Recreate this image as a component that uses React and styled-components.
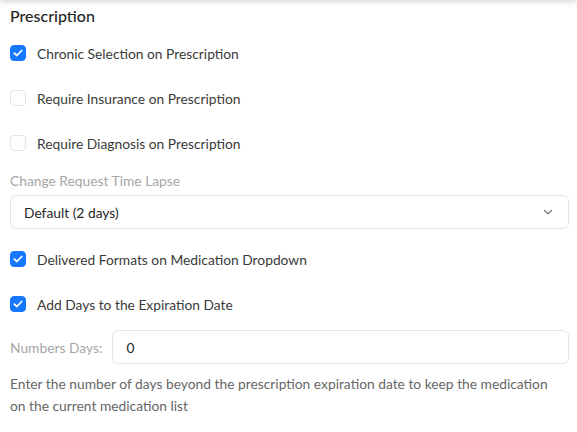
import styled, { createGlobalStyle } from 'styled-components'

const GlobalStyle = createGlobalStyle`
  html, body {
    margin: 0;
    padding: 0;
    background: #fff;
  }
  body {
    font-family: Lato, "Noto Sans", sans-serif;
  }
`

const Panel = styled.div`
  width: 577px;
  height: 432px;
  box-sizing: border-box;
  padding: 0 8px 0 10px;
  position: relative;
  background: #fff;
  overflow: hidden;
  &::before {
    content: '';
    position: absolute;
    left: 0;
    right: 0;
    top: -6px;
    height: 6px;
    box-shadow: 0 1px 6px rgba(120, 100, 110, 0.35);
  }
`

const Title = styled.h2`
  margin: 0;
  padding-top: 6px;
  font-size: 16px;
  font-weight: 500;
  line-height: 20px;
  color: #262626;
`

const CheckRow = styled.label`
  display: flex;
  align-items: center;
  gap: 11px;
  height: 16px;
  margin-top: ${p => p.$gap}px;
  font-size: 13.8px;
  color: #3a3a3a;
`

const Box = styled.span`
  width: 16px;
  height: 16px;
  box-sizing: border-box;
  border-radius: 4px;
  display: flex;
  align-items: center;
  justify-content: center;
  background: ${p => (p.$checked ? '#1677ff' : '#fff')};
  border: 1px solid ${p => (p.$checked ? '#1677ff' : '#e3e3e3')};
`

const FieldLabel = styled.div`
  margin-top: 22px;
  font-size: 13.8px;
  line-height: 16px;
  color: #a6a6a6;
`

const Select = styled.div`
  margin-top: 6px;
  height: 34px;
  box-sizing: border-box;
  border: 1px solid #e6e6e6;
  border-radius: 6px;
  display: flex;
  align-items: center;
  justify-content: space-between;
  padding: 0 14px 0 13px;
  font-size: 13.8px;
  color: #262626;
`

const InputRow = styled.div`
  margin-top: 18px;
  display: flex;
  align-items: center;
  gap: 10px;
`

const InlineLabel = styled.span`
  flex: 0 0 92px;
  white-space: nowrap;
  font-size: 13.8px;
  color: #a6a6a6;
`

const Input = styled.div`
  flex: 1;
  height: 34px;
  box-sizing: border-box;
  border: 1px solid #e6e6e6;
  border-radius: 6px;
  display: flex;
  align-items: center;
  padding: 0 13px;
  font-size: 13.8px;
  color: #262626;
`

const Help = styled.p`
  margin: 9px 0 0;
  max-width: 552px;
  font-size: 13.8px;
  line-height: 22px;
  color: #666;
`

const Check = () => (
  <svg width="10" height="8" viewBox="0 0 10 8" fill="none">
    <path d="M1.3 4.1 L3.9 6.5 L8.7 1.5" stroke="#fff" strokeWidth="1.8" strokeLinecap="round" strokeLinejoin="round" />
  </svg>
)

function CheckItem({ checked, gap, children }) {
  return (
    <CheckRow $gap={gap}>
      <Box $checked={checked}>{checked && <Check />}</Box>
      {children}
    </CheckRow>
  )
}

export default function App() {
  return (
    <>
      <GlobalStyle />
      <Panel>
        <Title>Prescription</Title>
        <CheckItem checked gap={19}>Chronic Selection on Prescription</CheckItem>
        <CheckItem gap={29}>Require Insurance on Prescription</CheckItem>
        <CheckItem gap={29}>Require Diagnosis on Prescription</CheckItem>
        <FieldLabel>Change Request Time Lapse</FieldLabel>
        <Select>
          Default (2 days)
          <svg width="12" height="12" viewBox="0 0 12 12" fill="none">
            <path d="M2.5 4.5 L6 7.8 L9.5 4.5" stroke="#777" strokeWidth="1.3" strokeLinecap="round" strokeLinejoin="round" />
          </svg>
        </Select>
        <CheckItem checked gap={22}>Delivered Formats on Medication Dropdown</CheckItem>
        <CheckItem checked gap={29}>Add Days to the Expiration Date</CheckItem>
        <InputRow>
          <InlineLabel>Numbers Days:</InlineLabel>
          <Input>0</Input>
        </InputRow>
        <Help>
          Enter the number of days beyond the prescription expiration date to keep the medication
          on the current medication list
        </Help>
      </Panel>
    </>
  )
}
